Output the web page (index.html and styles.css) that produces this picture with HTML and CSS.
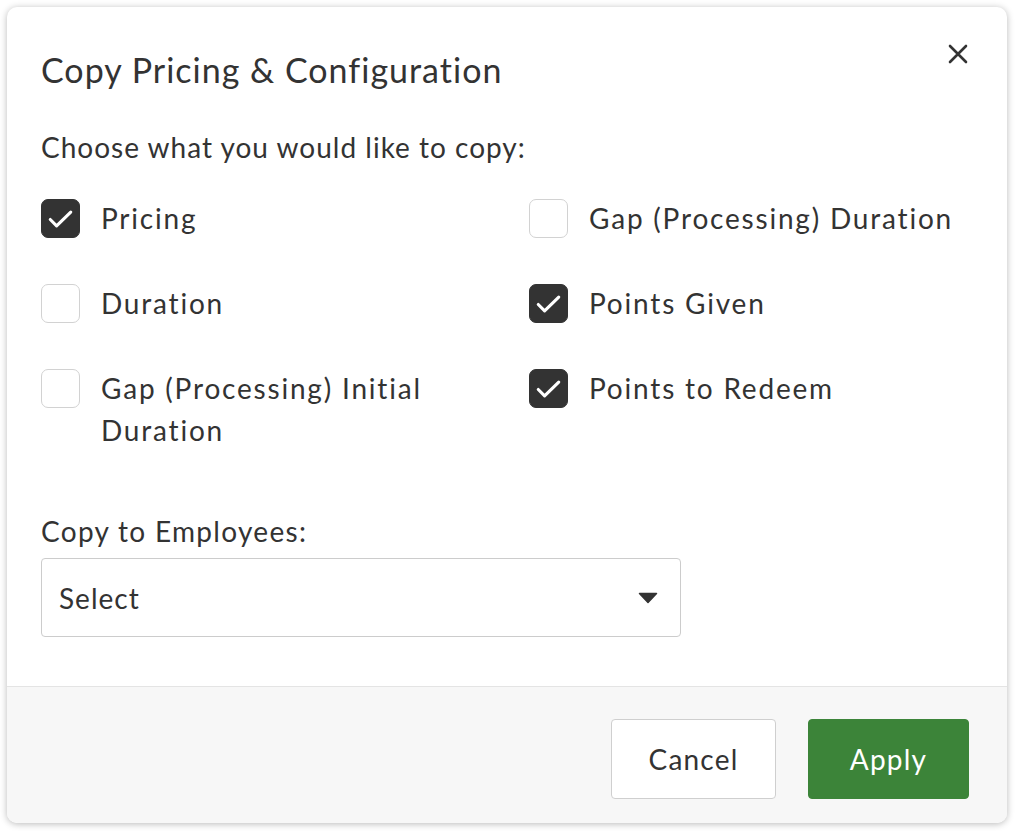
FILE: index.html
```html
<!DOCTYPE html>
<html lang="en">
<head>
<meta charset="utf-8">
<title>Copy Pricing &amp; Configuration</title>
<link rel="stylesheet" href="styles.css">
</head>
<body>
<div class="dialog">
  <div class="dialog-body">
    <div class="header">
      <h1 class="title">Copy Pricing &amp; Configuration</h1>
      <button class="close" aria-label="Close">
        <svg width="20" height="20" viewBox="0 0 20 20"><path d="M2 2L18 18M18 2L2 18" stroke="#333" stroke-width="2.6" stroke-linecap="round"/></svg>
      </button>
    </div>
    <p class="prompt">Choose what you would like to copy:</p>
    <div class="options">
      <label class="option">
        <span class="box checked"><svg width="38" height="38" viewBox="0 0 38 38"><path d="M8.5 19.5L15 26L29.5 12" fill="none" stroke="#fff" stroke-width="3.2" stroke-linecap="round" stroke-linejoin="round"/></svg></span>
        <span class="text">Pricing</span>
      </label>
      <label class="option">
        <span class="box"></span>
        <span class="text">Gap (Processing) Duration</span>
      </label>
      <label class="option">
        <span class="box"></span>
        <span class="text">Duration</span>
      </label>
      <label class="option">
        <span class="box checked"><svg width="38" height="38" viewBox="0 0 38 38"><path d="M8.5 19.5L15 26L29.5 12" fill="none" stroke="#fff" stroke-width="3.2" stroke-linecap="round" stroke-linejoin="round"/></svg></span>
        <span class="text">Points Given</span>
      </label>
      <label class="option">
        <span class="box"></span>
        <span class="text">Gap (Processing) Initial<br>Duration</span>
      </label>
      <label class="option">
        <span class="box checked"><svg width="38" height="38" viewBox="0 0 38 38"><path d="M8.5 19.5L15 26L29.5 12" fill="none" stroke="#fff" stroke-width="3.2" stroke-linecap="round" stroke-linejoin="round"/></svg></span>
        <span class="text">Points to Redeem</span>
      </label>
    </div>
    <div class="field-label">Copy to Employees:</div>
    <div class="select">
      <span>Select</span>
      <svg width="20" height="12" viewBox="0 0 20 12"><path d="M1.5 1.5H18.5L10 10.5Z" fill="#333" stroke="#333" stroke-width="1.5" stroke-linejoin="round"/></svg>
    </div>
  </div>
  <div class="footer">
    <button class="btn btn-cancel">Cancel</button>
    <button class="btn btn-apply">Apply</button>
  </div>
</div>
</body>
</html>
```
FILE: styles.css
```css
* { box-sizing: border-box; }
html, body { margin: 0; padding: 0; background: #fff; }
body {
  padding: 7px 8px 8px 7px;
  font-family: "Lato", "Open Sans", sans-serif;
  color: #333;
}
.dialog {
  width: 1000px;
  height: 816px;
  background: #fff;
  border-radius: 10px;
  box-shadow: 0 1px 7px rgba(0,0,0,0.28);
  display: flex;
  flex-direction: column;
  overflow: hidden;
}
.dialog-body {
  flex: 1;
  padding: 43px 38px 0 34px;
}
.header {
  display: flex;
  justify-content: space-between;
  align-items: flex-start;
}
.title {
  margin: 0;
  font-size: 34px;
  font-weight: 400;
  line-height: 40px;
  letter-spacing: 1px;
}
.close {
  border: 0;
  background: none;
  padding: 0;
  margin: -6px 1px 0 0;
  width: 20px;
  height: 20px;
  cursor: pointer;
}
.close svg { display: block; }
.prompt {
  margin: 39px 0 0;
  font-size: 28px;
  line-height: 36px;
  letter-spacing: 1px;
}
.options {
  margin-top: 32px;
  display: grid;
  grid-template-columns: 488px 1fr;
  row-gap: 43px;
}
.option {
  display: flex;
  align-items: flex-start;
  gap: 21px;
  font-size: 28px;
  line-height: 42px;
  letter-spacing: 1.8px;
}
.box {
  flex: none;
  width: 39px;
  height: 39px;
  margin-top: 2px;
  border: 1px solid #d2d2d2;
  border-radius: 7px;
  background: #fff;
  display: flex;
  align-items: center;
  justify-content: center;
}
.box.checked {
  background: #333;
  border-color: #333;
}
.box svg { display: block; }
.field-label {
  margin-top: 59px;
  font-size: 28px;
  line-height: 42px;
  letter-spacing: 1.3px;
}
.select {
  margin-top: 6px;
  width: 640px;
  height: 79px;
  border: 1px solid #cccccc;
  border-radius: 4px;
  display: flex;
  align-items: center;
  justify-content: space-between;
  padding: 0 22px 0 17px;
  font-size: 28px;
  letter-spacing: 1px;
}
.select svg { display: block; }
.footer {
  height: 137px;
  flex: none;
  background: #f7f7f7;
  border-top: 1px solid #e4e4e4;
  display: flex;
  justify-content: flex-end;
  align-items: flex-start;
  gap: 32px;
  padding: 32px 38px 0 0;
}
.btn {
  height: 80px;
  border-radius: 4px;
  font-family: inherit;
  font-size: 28px;
  letter-spacing: 1.2px;
  cursor: pointer;
}
.btn-cancel {
  width: 165px;
  background: #fff;
  border: 1px solid #cfcfcf;
  color: #333;
}
.btn-apply {
  width: 161px;
  background: #3c8439;
  border: 1px solid #3c8439;
  color: #fff;
}
```
